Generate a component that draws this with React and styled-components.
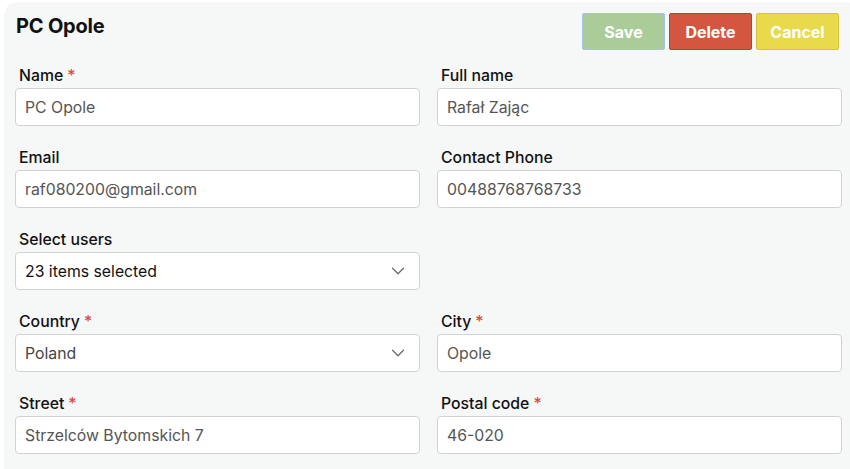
import styled, { createGlobalStyle } from "styled-components";
import { ChevronDown } from "lucide-react";

const GlobalStyle = createGlobalStyle`
  html, body {
    margin: 0;
    padding: 0;
    background: #ffffff;
    overflow: hidden;
  }
  body {
    font-family: "Inter", "Liberation Sans", sans-serif;
  }
`;

const Page = styled.div`
  padding: 4px 0 0 6px;
  width: 850px;
  height: 469px;
  box-sizing: border-box;
`;

const Card = styled.div`
  width: 852px;
  height: 480px;
  box-sizing: border-box;
  background: #f6f7f7;
  border-radius: 10px;
  box-shadow: 0 0 3px rgba(0, 0, 0, 0.12);
  padding: 9px 16px 0 9px;
`;

const Header = styled.div`
  display: flex;
  align-items: flex-start;
  justify-content: space-between;
`;

const Title = styled.h1`
  margin: 0 0 0 1px;
  font-size: 20px;
  line-height: 26px;
  font-weight: 700;
  color: #111;
  letter-spacing: -0.2px;
`;

const Actions = styled.div`
  display: flex;
  gap: 4px;
  margin-right: 3px;
`;

const palette = {
  save: { bg: "#a9cc99", border: "#a6c3e6" },
  delete: { bg: "#d55640", border: "#b8412f" },
  cancel: { bg: "#e8da4a", border: "#dcc23c" },
};

const Button = styled.button`
  width: 83px;
  height: 37px;
  padding: 0;
  border: 1px solid ${(p) => palette[p.$variant].border};
  border-radius: 2px;
  background: ${(p) => palette[p.$variant].bg};
  color: #fff;
  font-family: "Inter", "Liberation Sans", sans-serif;
  font-size: 16px;
  font-weight: 700;
  cursor: pointer;
`;

const Grid = styled.div`
  display: grid;
  grid-template-columns: 405px 405px;
  column-gap: 17px;
  row-gap: 22px;
  margin-top: 16px;
`;

const Field = styled.div`
  display: flex;
  flex-direction: column;
  gap: 2px;
`;

const Label = styled.label`
  font-size: 15.8px;
  font-weight: 500;
  color: #111;
  line-height: 20px;
  padding-left: 4px;
`;

const Star = styled.span`
  color: #d9483b;
  margin-left: 4px;
`;

const Input = styled.input`
  height: 38px;
  box-sizing: border-box;
  border: 1px solid #cfd3d8;
  border-radius: 4px;
  background: #fff;
  padding: 0 9px;
  font-family: "Inter", "Liberation Sans", sans-serif;
  font-size: 15.8px;
  color: #555;
  outline: none;
`;

const Select = styled.div`
  height: 38px;
  box-sizing: border-box;
  border: 1px solid #cfd3d8;
  border-radius: 4px;
  background: #fff;
  padding: 0 10px 0 9px;
  display: flex;
  align-items: center;
  justify-content: space-between;
  font-size: 15.8px;
  color: ${(p) => (p.$dark ? "#111" : "#444")};
`;

const Empty = styled.div``;

const TextField = ({ label, value, required }) => (
  <Field>
    <Label>
      {label}
      {required && <Star>*</Star>}
    </Label>
    <Input defaultValue={value} />
  </Field>
);

const SelectField = ({ label, value, required, dark }) => (
  <Field>
    <Label>
      {label}
      {required && <Star>*</Star>}
    </Label>
    <Select $dark={dark}>
      <span>{value}</span>
      <ChevronDown size={22} color="#666" strokeWidth={1.3} />
    </Select>
  </Field>
);

export default function App() {
  return (
    <>
      <GlobalStyle />
      <Page>
        <Card>
          <Header>
            <Title>PC Opole</Title>
            <Actions>
              <Button $variant="save">Save</Button>
              <Button $variant="delete">Delete</Button>
              <Button $variant="cancel">Cancel</Button>
            </Actions>
          </Header>
          <Grid>
            <TextField label="Name" value="PC Opole" required />
            <TextField label="Full name" value="Rafał Zając" />
            <TextField label="Email" value="raf080200@gmail.com" />
            <TextField label="Contact Phone" value="00488768768733" />
            <SelectField label="Select users" value="23 items selected" dark />
            <Empty />
            <SelectField label="Country" value="Poland" required />
            <TextField label="City" value="Opole" required />
            <TextField label="Street" value="Strzelców Bytomskich 7" required />
            <TextField label="Postal code" value="46-020" required />
          </Grid>
        </Card>
      </Page>
    </>
  );
}
